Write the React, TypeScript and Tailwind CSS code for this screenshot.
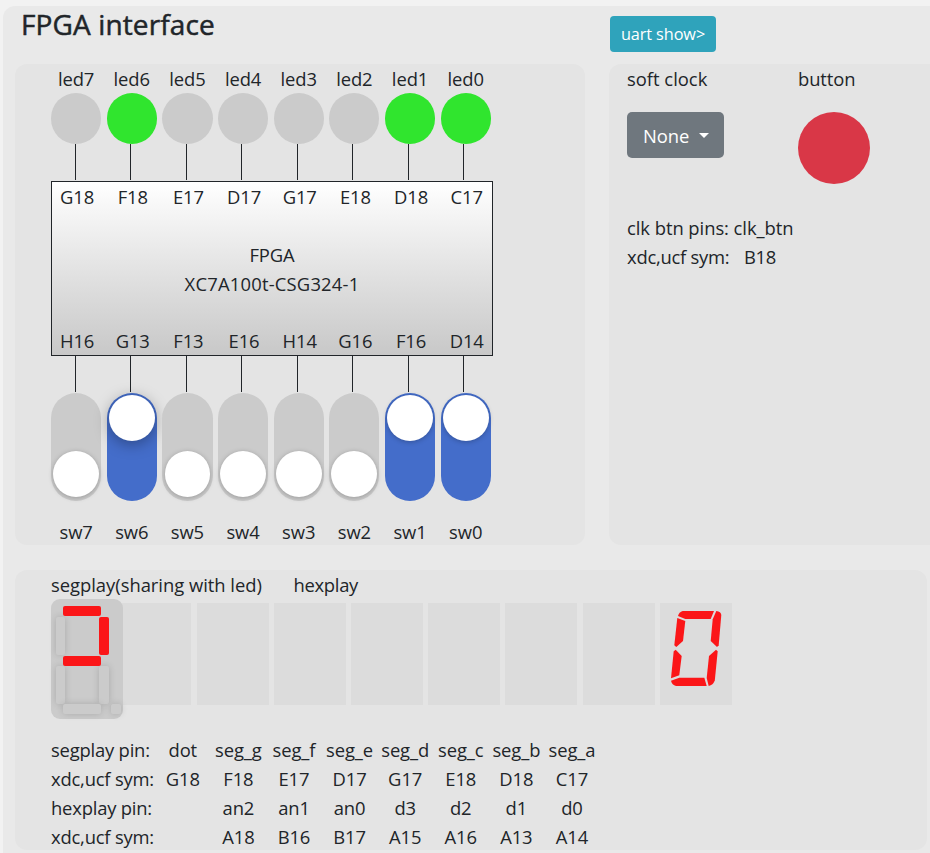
const pins = [
  { led: 'led7', on: false, top: 'G18', bottom: 'H16', sw: 'sw7' },
  { led: 'led6', on: true, top: 'F18', bottom: 'G13', sw: 'sw6' },
  { led: 'led5', on: false, top: 'E17', bottom: 'F13', sw: 'sw5' },
  { led: 'led4', on: false, top: 'D17', bottom: 'E16', sw: 'sw4' },
  { led: 'led3', on: false, top: 'G17', bottom: 'H14', sw: 'sw3' },
  { led: 'led2', on: false, top: 'E18', bottom: 'G16', sw: 'sw2' },
  { led: 'led1', on: true, top: 'D18', bottom: 'F16', sw: 'sw1' },
  { led: 'led0', on: true, top: 'C17', bottom: 'D14', sw: 'sw0' },
];

const pinRows = [
  { label: 'segplay pin:', cells: ['dot', 'seg_g', 'seg_f', 'seg_e', 'seg_d', 'seg_c', 'seg_b', 'seg_a'] },
  { label: 'xdc,ucf sym:', cells: ['G18', 'F18', 'E17', 'D17', 'G17', 'E18', 'D18', 'C17'] },
  { label: 'hexplay pin:', cells: ['', 'an2', 'an1', 'an0', 'd3', 'd2', 'd1', 'd0'] },
  { label: 'xdc,ucf sym:', cells: ['', 'A18', 'B16', 'B17', 'A15', 'A16', 'A13', 'A14'] },
];

function Wires() {
  return (
    <div className="flex h-[36px] pl-[24px]">
      {pins.map((p) => (
        <div key={p.led} className="w-[55.45px] shrink-0">
          <div className="h-full w-px bg-[#212529]" />
        </div>
      ))}
    </div>
  );
}

function Switch({ on, raised }: { on: boolean; raised: boolean }) {
  return (
    <div
      className={
        'flex h-[108px] w-[50.2px] flex-col items-center rounded-full pt-[2.2px] pb-[3.8px] ' +
        (on ? 'justify-start bg-[#446dca]' : 'justify-end bg-[#cbcbcb]')
      }
    >
      <div
        className={
          'h-[45.8px] w-[45.8px] rounded-full bg-white ' +
          (raised ? 'shadow-[0_3px_15px_rgba(0,0,0,0.35)]' : 'shadow-[0_1px_5px_rgba(0,0,0,0.25)]')
        }
      />
    </div>
  );
}

const segBase = 'absolute rounded-[2px] ';
const lit = 'bg-[#fb1618] ';
const dim = 'bg-[#cbcbcb] shadow-[0_0_7px_rgba(0,0,0,0.16)] ';

function SegDisplay() {
  return (
    <div className="relative z-10 h-[120px] w-[72px] shrink-0 rounded-[9px] bg-[#cbcbcb]">
      <div className={segBase + dim + 'left-[5px] top-[18px] h-[38px] w-[9px]'} />
      <div className={segBase + dim + 'left-[5px] top-[67px] h-[38px] w-[9px]'} />
      <div className={segBase + dim + 'left-[48px] top-[67px] h-[38px] w-[10px]'} />
      <div className={segBase + dim + 'left-[12px] top-[105px] h-[10px] w-[38px]'} />
      <div className={segBase + dim + 'left-[60px] top-[105px] h-[10px] w-[10px]'} />
      <div className={segBase + lit + 'left-[12px] top-[7px] h-[10px] w-[38px]'} />
      <div className={segBase + lit + 'left-[48px] top-[18px] h-[38px] w-[10px]'} />
      <div className={segBase + lit + 'left-[12px] top-[57px] h-[10px] w-[38px]'} />
    </div>
  );
}

function HexZero() {
  return (
    <svg width="72" height="102" viewBox="0 0 72 102" fill="#fb1618">
      <path d="M18 13Q19 9 22.7 8L54 8L50.7 16L25.3 16Z" />
      <path d="M17.3 15L25.3 18L23 38L16.3 44L14.3 42.3Z" />
      <path d="M56.3 8Q61 8.5 61.3 12L58.7 42.3L57 44L50.7 38L52.7 16.3Z" />
      <path d="M15.7 46.7L21.7 53L19.3 72.3L11 75.3L13.7 48.3Z" />
      <path d="M56 46.7L57.7 48.3L54.8 77.5Q53 82 48.7 83L46.7 75L49 53Z" />
      <path d="M11 77.7L19.3 74.7L44.3 74.7L46.7 83L16 83Q12 82 11 77.7Z" />
    </svg>
  );
}

export default function App() {
  return (
    <div className="h-[853px] w-[930px] overflow-hidden bg-[#f2f2f2] pl-[3px] pt-[6px] font-['Open_Sans','Noto_Sans',sans-serif] text-[18.4px] leading-[28.8px] tracking-[-0.1px] text-[#212529]">
      <div className="h-[860px] w-[940px] rounded-[12px] bg-[#e9e9e9] pl-[12px]">
        <header className="flex h-[58px] items-start">
          <h1 className="w-[595px] pl-[6px] text-[28px] font-medium leading-[36px] tracking-[0.12px] [-webkit-text-stroke:0.5px_#212529]">
            FPGA interface
          </h1>
          <button className="mt-[10px] h-[36px] w-[106px] rounded-[4px] bg-[#2fa3bb] text-[16.3px] leading-[36px] text-white">
            uart show&gt;
          </button>
        </header>

        <div className="flex h-[481px] gap-[24px]">
          <section className="w-[570px] shrink-0 rounded-[12px] bg-[#e4e4e4] pl-[36px]">
            <div className="flex gap-[5.48px]">
              {pins.map((p) => (
                <div key={p.led} className="w-[50.2px] shrink-0">
                  <div className="h-[29px] pt-px text-center">{p.led}</div>
                  <div className={'h-[51px] rounded-full ' + (p.on ? 'bg-[#30e52e]' : 'bg-[#cbcbcb]')} />
                </div>
              ))}
            </div>
            <Wires />
            <div className="mt-px flex h-[175px] w-[442px] flex-col justify-between border border-[#212529] bg-linear-to-b from-white to-[#c8c8c8] pt-px">
              <div className="flex gap-[5.48px]">
                {pins.map((p) => (
                  <div key={p.led} className="w-[50.2px] shrink-0 text-center">{p.top}</div>
                ))}
              </div>
              <div className="pt-px text-center">
                <div>FPGA</div>
                <div className="tracking-[0.2px]">XC7A100t-CSG324-1</div>
              </div>
              <div className="-mb-px flex gap-[5.48px]">
                {pins.map((p) => (
                  <div key={p.sw} className="w-[50.2px] shrink-0 text-center">{p.bottom}</div>
                ))}
              </div>
            </div>
            <Wires />
            <div className="mt-px flex gap-[5.48px]">
              {pins.map((p) => (
                <div key={p.sw} className="w-[50.2px] shrink-0">
                  <Switch on={p.on} raised={p.sw === 'sw6'} />
                  <div className="mt-[17px] text-center">{p.sw}</div>
                </div>
              ))}
            </div>
          </section>

          <section className="w-[340px] shrink-0 rounded-[12px] bg-[#e4e4e4] pl-[18px] pt-px">
            <div className="flex">
              <div className="w-[171px]">
                <div className="tracking-[0px]">soft clock</div>
                <button className="mt-[18px] flex h-[46px] w-[97px] items-center rounded-[5px] bg-[#6f777e] pl-[16px] pt-[4px] text-white">
                  None
                  <span className="-mt-[2px] ml-[10px] border-x-[5.5px] border-t-[5.5px] border-x-transparent border-t-white" />
                </button>
              </div>
              <div>
                <div>button</div>
                <div className="mt-[18px] h-[72px] w-[72px] rounded-full bg-[#d93747]" />
              </div>
            </div>
            <div className="mt-[30px] tracking-[-0.05px]">clk btn pins: clk_btn</div>
            <div className="flex">
              <span className="w-[117px] tracking-[-0.25px]">xdc,ucf sym:</span>
              <span className="tracking-[-0.3px]">B18</span>
            </div>
          </section>
        </div>

        <section className="mt-[25px] h-[280px] w-[912px] rounded-[12px] bg-[#e4e4e4] pl-[36px] pt-px">
          <div className="flex h-[28px]">
            <span className="w-[242.5px] tracking-[-0.02px]">segplay(sharing with led)</span>
            <span className="tracking-[-0.3px]">hexplay</span>
          </div>
          <div className="flex h-[120px]">
            <SegDisplay />
            <div className="-ml-[3.6px] mt-[4px] flex gap-[5.2px]">
              {[0, 1, 2, 3, 4, 5, 6, 7].map((i) => (
                <div key={i} className="h-[102px] w-[72px] bg-[#dcdcdc]">{i === 7 && <HexZero />}</div>
              ))}
            </div>
          </div>
          <div className="mt-[17px]">
            {pinRows.map((row, r) => (
              <div key={r} className="flex h-[29px]">
                <span className="w-[104px] shrink-0 whitespace-nowrap tracking-[-0.2px]">{row.label}</span>
                {row.cells.map((c, i) => (
                  <span key={i} className="flex w-[55.6px] shrink-0 justify-center">{c}</span>
                ))}
              </div>
            ))}
          </div>
        </section>
      </div>
    </div>
  );
}
